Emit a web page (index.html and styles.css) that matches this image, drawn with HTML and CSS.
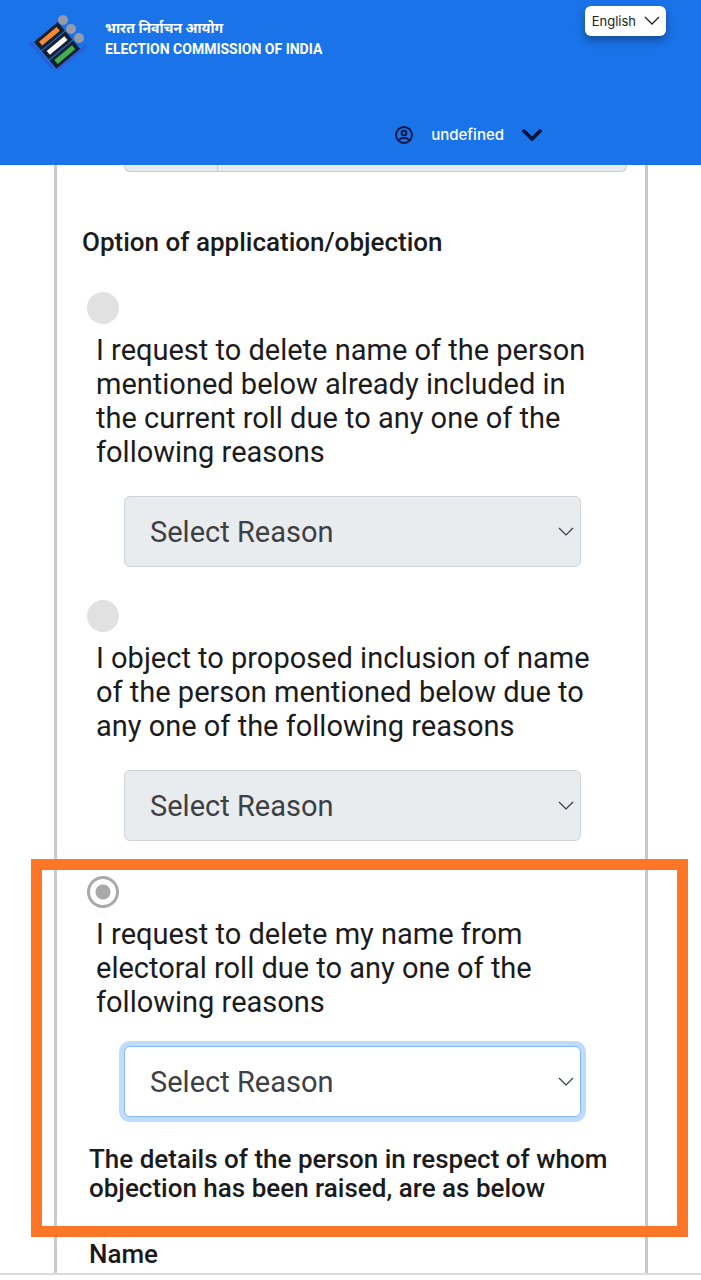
FILE: index.html
```
<!DOCTYPE html>
<html lang="en">
<head>
  <meta charset="UTF-8" />
  <meta name="viewport" content="width=device-width, initial-scale=1" />
  <title>Election Commission of India</title>
  <link rel="stylesheet" href="styles.css">
</head>
<body>
  <header class="site-header">
    <div class="header-top">
      <a class="brand" href="#">
        <svg class="brand-logo" viewBox="0 0 60 60" aria-hidden="true">
          <g transform="translate(5 29) rotate(-40)">
            <rect x="0" y="0" width="31" height="11" fill="#17202c" />
            <rect x="4" y="3" width="23" height="5" fill="#f58a32" />
            <rect x="0" y="12" width="31" height="11" fill="#17202c" />
            <rect x="4" y="15" width="23" height="5" fill="#fff" />
            <rect x="0" y="24" width="31" height="11" fill="#17202c" />
            <rect x="4" y="27" width="23" height="5" fill="#43b051" />
          </g>
          <g fill="#979ba9">
            <circle cx="34" cy="7" r="5" />
            <circle cx="42" cy="16" r="5" />
            <circle cx="50" cy="25" r="5" />
          </g>
          <g fill="none" stroke="#3355cf" stroke-width="3" stroke-dasharray="1.5 1">
            <path d="M1 29 23 55" />
            <path d="M29 56 57 33" />
          </g>
        </svg>
        <span class="brand-text">
          <span lang="hi">भारत निर्वाचन आयोग</span>
          <span>ELECTION COMMISSION OF INDIA</span>
        </span>
      </a>
      <button class="lang-btn" type="button">
        English
        <svg width="16" height="10" viewBox="0 0 16 10" aria-hidden="true">
          <path d="M1 1l7 7 7-7" fill="none" stroke="#222" stroke-width="1.3" />
        </svg>
      </button>
    </div>
    <button class="user-btn" type="button">
      <svg width="18" height="18" viewBox="0 0 18 18" fill="none" stroke="#06123a" stroke-width="1.8" aria-hidden="true">
        <circle cx="9" cy="9" r="8" />
        <circle cx="9" cy="7" r="2.4" />
        <path d="M3.5 14.5c2.5-3.4 8.5-3.4 11 0" />
      </svg>
      <span>undefined</span>
      <svg width="20" height="12" viewBox="0 0 20 12" aria-hidden="true">
        <path d="M2 2l8 8 8-8" fill="none" stroke="#06123a" stroke-width="3.6" stroke-linecap="round" />
      </svg>
    </button>
  </header>

  <form class="form-card">
    <div class="field-group">
      <span class="field-prefix"></span>
      <input class="field-input" type="text" aria-label="Mobile number" disabled>
    </div>

    <h2 class="section-title">Option of application/objection</h2>

    <div class="option">
      <input type="radio" name="option" id="optionOther" disabled>
      <label for="optionOther">I request to delete name of the person mentioned below already included in the current roll due to any one of the following reasons</label>
      <select aria-label="Reason for deletion" disabled>
        <option>Select Reason</option>
      </select>
    </div>

    <div class="option">
      <input type="radio" name="option" id="optionObject" disabled>
      <label for="optionObject">I object to proposed inclusion of name of the person mentioned below due to any one of the following reasons</label>
      <select aria-label="Reason for objection" disabled>
        <option>Select Reason</option>
      </select>
    </div>

    <div class="highlight">
      <div class="option">
        <input type="radio" name="option" id="optionSelf" checked>
        <label for="optionSelf">I request to delete my name from electoral roll due to any one of the following reasons</label>
        <select class="active" aria-label="Reason for deleting my name">
          <option>Select Reason</option>
        </select>
      </div>
      <h3 class="details-title">The details of the person in respect of whom objection has been raised, are as below</h3>
    </div>

    <h3 class="name-title">Name</h3>
  </form>
</body>
</html>
```
FILE: styles.css
```
* {
  box-sizing: border-box;
}
body {
  margin: 0;
  background: #fff;
  color: #1b1b1d;
  font-family: Roboto, "Noto Sans", sans-serif;
}
button {
  border: none;
  cursor: pointer;
  font-family: Inter, sans-serif;
}
.site-header {
  position: sticky;
  top: 0;
  z-index: 2;
  height: 165px;
  background: #1a73e8;
}
.header-top {
  display: flex;
  justify-content: space-between;
  align-items: flex-start;
  padding: 6px 35px 0 29px;
}
.brand {
  display: flex;
  gap: 16px;
  padding-top: 7px;
  color: #fff;
  text-decoration: none;
}
.brand-logo {
  width: 60px;
  height: 60px;
}
.brand-text {
  display: flex;
  flex-direction: column;
  padding-top: 5px;
  font-size: 14px;
  font-weight: 700;
  line-height: 21px;
}
.lang-btn {
  display: flex;
  align-items: center;
  gap: 8px;
  height: 30px;
  padding: 0 6px 0 7px;
  border-radius: 6px;
  background: #fff;
  box-shadow: 0 4px 8px rgba(0, 0, 0, 0.35);
  color: #222;
  font-size: 13px;
}
.user-btn {
  display: flex;
  align-items: center;
  gap: 18px;
  margin: 52px 159px 0 auto;
  padding: 0;
  background: none;
  color: #fff;
  font-size: 15px;
  font-weight: 500;
}
.form-card {
  margin: 0 53px 0 54px;
  border: solid #c8c9ca;
  border-width: 0 3px;
  padding-bottom: 4px;
}
/* tail of the previous field, scrolled under the header */
.field-group {
  display: flex;
  height: 7px;
  margin: 0 18px 0 67px;
  border: 1px solid #c9ced2;
  border-top: 0;
  border-radius: 0 0 6px 6px;
  background: #e9ecef;
  overflow: hidden;
}
.field-prefix {
  width: 93px;
  border-right: 1px solid #c9ced2;
}
.field-input {
  flex: 1;
  min-width: 0;
  border: none;
  background: none;
}
.section-title,
.details-title,
.name-title {
  margin: 0;
  font-size: 26px;
  font-weight: 500;
  line-height: 29px;
}
.section-title {
  padding: 56px 0 35px 25px;
}
.option {
  display: flex;
  flex-direction: column;
  padding: 0 64px 0 30px;
  margin-bottom: 33px;
}
.option input {
  appearance: none;
  width: 32px;
  height: 32px;
  margin: 0 0 9px;
  border-radius: 50%;
  background: #e1e1e1;
}
.option input:checked {
  border: 3px solid #a9a9a9;
  background: radial-gradient(circle, #a9a9a9 7px, #fff 8px);
}
.option label {
  margin: 0 -14px 27px 9px;
  font-size: 29px;
  line-height: 34px;
}
.option select {
  appearance: none;
  height: 71px;
  margin-left: 37px;
  padding: 0 40px 0 25px;
  border: 1px solid #ced4da;
  border-radius: 6px;
  background: #e9ecef url("data:image/svg+xml,%3Csvg xmlns='http://www.w3.org/2000/svg' width='16' height='9' viewBox='0 0 16 9'%3E%3Cpath d='M1 1l7 7 7-7' fill='none' stroke='%23343a40' stroke-width='1.2'/%3E%3C/svg%3E") no-repeat right 6px center;
  color: #3c4044;
  font-family: inherit;
  font-size: 29px;
  opacity: 1;
}
.option select.active {
  border-color: #86b7fe;
  background-color: #fff;
  box-shadow: 0 0 0 5px #bfdcfb;
}
.highlight {
  position: relative;
  padding: 2px 0 25px;
}
.highlight::after {
  content: "";
  position: absolute;
  inset: -15px -43px -9px -26px;
  border: 11px solid #ff7626;
  pointer-events: none;
}
.highlight .option {
  margin-bottom: 28px;
}
.details-title {
  padding: 0 32px;
}
.name-title {
  padding: 12px 32px 0;
}
body::after {
  content: "";
  display: block;
  border-top: 2px solid #dcdcdc;
}
```
